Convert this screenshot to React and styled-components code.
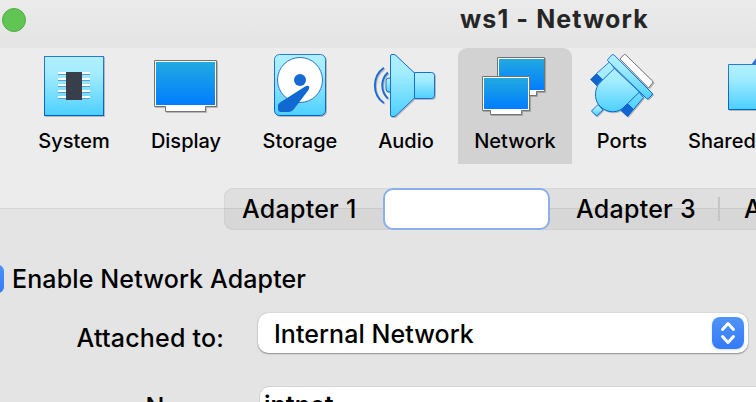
import React from "react";
import styled, { createGlobalStyle } from "styled-components";

const GlobalStyle = createGlobalStyle`
  * { box-sizing: border-box; }
  html, body { margin: 0; padding: 0; overflow: hidden; background: #e4e4e4; }
  body { font-family: Inter, "Liberation Sans", sans-serif; color: #000; }
`;

const Window = styled.main`
  width: 756px;
  height: 402px;
  overflow: hidden;
  display: flex;
  flex-direction: column;
  background: #ececec;
`;

const TitleBar = styled.header`
  height: 48px;
  flex: none;
  display: flex;
  align-items: flex-start;
  padding: 4px 0 0 2px;
  background: linear-gradient(#ebebeb, #e4e4e4);
`;

const ZoomButton = styled.button`
  width: 24px;
  height: 24px;
  margin: 4px 0 0;
  padding: 0;
  border: 1px solid #56aa4a;
  border-radius: 50%;
  background: #61c554;
`;

const Title = styled.h1`
  margin: 0 0 0 434px;
  font-size: 25px;
  line-height: 30px;
  font-weight: 700;
  letter-spacing: 1.1px;
  color: #262626;
  white-space: nowrap;
`;

const Toolbar = styled.nav`
  height: 160px;
  flex: none;
  display: flex;
  align-items: flex-start;
  padding-left: 22px;
`;

const Tool = styled.button`
  width: ${(p) => p.$width}px;
  height: 116px;
  flex: none;
  display: flex;
  flex-direction: column;
  align-items: ${(p) => (p.$start ? "flex-start" : "center")};
  padding: 4px 0 0 ${(p) => (p.$start ? 16 : 0)}px;
  border: 0;
  border-radius: 9px 9px 0 0;
  background: ${(p) => (p.$active ? "#d2d2d2" : "transparent")};
  font-family: inherit;
  color: #000;
`;

const Icon = styled.svg`
  width: 68px;
  height: 68px;
  flex: none;
  overflow: visible;
  margin-left: ${(p) => p.$indent || 0}px;
  filter: drop-shadow(1px 1px 0 rgba(0, 0, 0, 0.22));
`;

const ToolLabel = styled.span`
  margin-top: 9px;
  font-size: 20px;
  line-height: 24px;
  font-weight: 540;
  letter-spacing: 0;
  white-space: nowrap;
`;

const Panel = styled.section`
  flex: 1;
  border-top: 1px solid #d6d6d6;
  background: #e4e4e4;
`;

const Tabs = styled.div`
  width: 900px;
  height: 42px;
  margin: -21px 0 0 224px;
  display: flex;
  align-items: center;
  border-radius: 9px;
  background: rgba(0, 0, 0, 0.055);
  box-shadow: inset 0 0 2px rgba(0, 0, 0, 0.14);
`;

const Tab = styled.button`
  width: ${(p) => p.$width}px;
  height: 42px;
  flex: none;
  padding: 0 0 0 ${(p) => p.$inset || 0}px;
  border: ${(p) => (p.$selected ? "2px solid #88b0ec" : "0")};
  border-radius: 10px;
  background: ${(p) => (p.$selected ? "#fff" : "transparent")};
  text-align: left;
  font: 450 25px/42px Inter, sans-serif;
  letter-spacing: 0.25px;
  color: #000;
  white-space: nowrap;
`;

const TabDivider = styled.span`
  width: 2px;
  height: 24px;
  background: #c5c5c5;
`;

const CheckRow = styled.label`
  height: 40px;
  display: flex;
  align-items: center;
  margin-top: 29px;
  font-size: 25px;
  font-weight: 450;
  letter-spacing: 0.13px;
`;

const CheckBox = styled.span`
  width: 28px;
  height: 28px;
  margin: 0 8px 0 -24px;
  border-radius: 6px;
  background: linear-gradient(#4d92fa, #3279f7);
`;

const Field = styled.div`
  height: 40px;
  display: flex;
  align-items: center;
  margin-top: ${(p) => p.$top}px;
`;

const FieldLabel = styled.span`
  width: 224px;
  flex: none;
  text-align: right;
  font-size: 25px;
  font-weight: 450;
  line-height: 40px;
  padding-top: ${(p) => p.$drop || 0}px;
  letter-spacing: 0.2px;
`;

const Select = styled.div`
  width: 490px;
  height: 40px;
  margin-left: 34px;
  display: flex;
  align-items: center;
  justify-content: space-between;
  padding: 0 4px 0 16px;
  border-radius: 10px;
  background: #fff;
  box-shadow: 0 0 1px rgba(0, 0, 0, 0.35), 0 1px 1.5px rgba(0, 0, 0, 0.35);
  font-size: 25px;
  font-weight: 450;
  letter-spacing: 0.06px;
`;

const SelectValue = styled.span`
  padding-top: 2px;
`;

const Stepper = styled.svg`
  width: 32px;
  height: 32px;
  border-radius: 8px;
  background: linear-gradient(#5093f9, #347af6);
  box-shadow: 0 1px 3px rgba(40, 110, 240, 0.2);
`;

const Input = styled.div`
  width: 530px;
  height: 40px;
  flex: none;
  margin-left: 36px;
  padding-left: 4px;
  border-radius: 9px;
  background: #fff;
  box-shadow: 0 0 0 1px #d2d2d2;
  font-size: 25px;
  font-weight: 560;
  line-height: 37px;
`;

const Defs = () => (
  <svg width="0" height="0" display="block">
    <defs>
      <linearGradient id="ice" x2="0" y2="1">
        <stop stopColor="#b0f0ff" />
        <stop offset=".3" stopColor="#a2ecff" />
        <stop offset="1" stopColor="#4dd0ff" />
      </linearGradient>
      <linearGradient id="rim" x2="0" y2="1">
        <stop stopColor="#2b78d6" />
        <stop offset="1" stopColor="#0060d0" />
      </linearGradient>
      <linearGradient id="screen" x2="0" y2="1">
        <stop stopColor="#22aae0" />
        <stop offset="1" stopColor="#007cff" />
      </linearGradient>
    </defs>
  </svg>
);

const SystemIcon = () => (
  <Icon viewBox="40 52 68 68">
    <rect x="44.5" y="56.5" width="59" height="59" fill="url(#ice)" stroke="url(#rim)" />
    {[72, 78, 84, 90, 96].map((y) => (
      <g key={y}>
        <path d={`M58 ${y}h32v2H58z`} fill="#fff" />
        <path d={`M58 ${y + 2}h32v1H58z`} fill="#599ed8" />
      </g>
    ))}
    <path d="M66 72h16v28H66z" fill="#393e4b" />
  </Icon>
);

const DisplayIcon = () => (
  <Icon viewBox="152 52 68 68">
    <path d="M154.5 60.5h62v46h-11v5h-40v-5h-11z" fill="#fff" stroke="#747474" />
    <path d="M156 62h59v43h-59z" fill="url(#screen)" />
  </Icon>
);

const StorageIcon = () => (
  <Icon viewBox="266 52 68 68">
    <rect x="274.5" y="54.5" width="51" height="61" rx="5" fill="url(#ice)" stroke="url(#rim)" />
    <circle cx="300" cy="80" r="22.5" fill="#fff" stroke="#2e72cc" />
    <circle cx="300" cy="80" r="6" fill="#156bd2" />
    <path d="M305.5 86.2L280 102.5q-2 1.3-2 3v3.5q0 3 3 3h8q3 0 5-3L308.5 90q1.5-3.5 0-4t-3 .2z" fill="#1268d1" />
  </Icon>
);

const AudioIcon = () => (
  <Icon viewBox="372 52 68 68" fill="url(#ice)" stroke="#176fd6">
    <path d="M390 78h-1q-3 0-3 3v8q0 3 3 3h1" />
    <path d="M390.5 56q0-1.5 1.5-1.5h2q1 0 2 1L414.5 73v25L396 115.5q-1 1-2 1h-2q-1.5 0-1.5-1.5z" />
    <path d="M414.5 72.5h17q3 0 3 3v20q0 3-3 3h-17z" />
    <path d="M387.8 72.5a18 18 0 0 0 0 26M383.8 67.7a22 22 0 0 0 0 35.4" fill="none" strokeWidth="1.9" />
  </Icon>
);

const NetworkIcon = () => (
  <Icon viewBox="481 52 68 68">
    <path d="M497.5 57.5h47v34h-8v4h-30v-4h-9z" fill="#fff" stroke="#747474" />
    <path d="M499 59h45v31h-45z" fill="url(#screen)" />
    <path d="M482.5 76.5h47v34h-8v4h-31v-4h-8z" fill="#fff" stroke="#747474" />
    <path d="M484 78h44v31h-44z" fill="url(#screen)" />
  </Icon>
);

const PortsIcon = () => (
  <Icon viewBox="588 52 68 68" fill="url(#ice)" stroke="url(#rim)" strokeLinejoin="round">
    <path d="M620 59l3.5-4q1.2-1.2 2.4 0L652.5 81q1 1 0 2l-4 5z" fill="#fff" stroke="#777" />
    <path d="M609.5 62l-13 11.5 6.5 6.5 11.5-11.5zM643.5 97.5l-10 12-6.5-6.5 12-11z" />
    <path d="M596.5 73.5l-6 6 6 6 6.5-5.5zM627 103.5l-6 7 6.5 6 6-7z" fill="#1264cf" />
    <path d="M598 104.5l-6.5 6.5 5 5 6.5-6z" />
    <path d="M614.3 68.5L600 82.5c-5.5 5.5-6 16-1.5 22 6 8 17 9.5 24 4L639.5 92z" />
    <path d="M607.7 59.5l4-4.5q1.2-1 2.4 0L652 93q1 1 0 2l-3.5 3.5q-1 1-2 0L608 61q-.8-.8-.3-1.5z" />
  </Icon>
);

const FolderIcon = () => (
  <Icon viewBox="724 52 68 68" $indent={36}>
    <path d="M751 65l6-8h24v8z" fill="#2c72cf" />
    <path d="M728.5 64.5h60v45h-60z" fill="url(#ice)" stroke="url(#rim)" />
  </Icon>
);

const tools = [
  { label: "System", width: 104, icon: SystemIcon },
  { label: "Display", width: 120, icon: DisplayIcon },
  { label: "Storage", width: 108, icon: StorageIcon },
  { label: "Audio", width: 104, icon: AudioIcon },
  { label: "Network", width: 114, icon: NetworkIcon, active: true },
  { label: "Ports", width: 100, icon: PortsIcon },
  { label: "Shared Folders", width: 180, icon: FolderIcon, start: true },
];

export default function App() {
  return (
    <Window>
      <GlobalStyle />
      <Defs />
      <TitleBar>
        <ZoomButton aria-label="Zoom" />
        <Title>ws1 - Network</Title>
      </TitleBar>
      <Toolbar>
        {tools.map(({ label, width, icon: Glyph, active, start }) => (
          <Tool key={label} $width={width} $active={active} $start={start}>
            <Glyph />
            <ToolLabel>{label}</ToolLabel>
          </Tool>
        ))}
      </Toolbar>
      <Panel>
        <Tabs>
          <Tab $width={159} $inset={18}>Adapter 1</Tab>
          <Tab $width={167} $selected aria-label="Adapter 2" />
          <Tab $width={168} $inset={26}>Adapter 3</Tab>
          <TabDivider />
          <Tab $width={166} $inset={24}>Adapter 4</Tab>
        </Tabs>
        <CheckRow>
          <CheckBox />
          Enable Network Adapter
        </CheckRow>
        <Field $top={14}>
          <FieldLabel $drop={10}>Attached to:</FieldLabel>
          <Select>
            <SelectValue>Internal Network</SelectValue>
            <Stepper viewBox="0 0 32 32" fill="none" stroke="#fff" strokeWidth="3" strokeLinecap="round" strokeLinejoin="round">
              <path d="M10.5 12.5L16 6.5l5.5 6M10.5 19.5l5.5 6 5.5-6" />
            </Stepper>
          </Select>
        </Field>
        <Field $top={34}>
          <FieldLabel>Name:</FieldLabel>
          <Input>intnet</Input>
        </Field>
      </Panel>
    </Window>
  );
}
